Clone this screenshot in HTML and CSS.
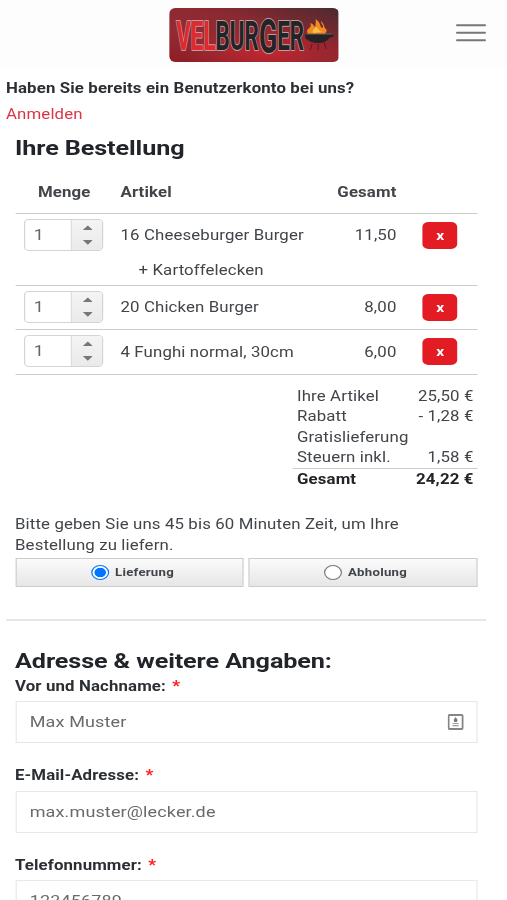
FILE: index.html
```html
<!DOCTYPE html>
<html lang="de">
<head>
<meta charset="utf-8">
<title>Velburger – Bestellung</title>
<link rel="stylesheet" href="styles.css">
</head>
<body>
<div class="page">
  <header class="topbar">
    <svg class="logo" viewBox="0 0 170 54" preserveAspectRatio="none" role="img" aria-label="Velburger">
      <defs>
        <linearGradient id="bg" x1="0" y1="1" x2="1" y2="0"><stop offset="0" stop-color="#8f1c24"/><stop offset=".3" stop-color="#942b34"/><stop offset=".6" stop-color="#8c2930"/><stop offset="1" stop-color="#4c2a30"/></linearGradient>
        <radialGradient id="glow" cx=".58" cy=".8" r=".5"><stop offset="0" stop-color="#c62630"/><stop offset="1" stop-color="#b0202a" stop-opacity="0"/></radialGradient>
      </defs>
      <rect width="170" height="54" rx="6" fill="url(#bg)"/>
      <rect width="170" height="54" rx="6" fill="url(#glow)"/>
      <text class="wordmark" x="7" y="42" textLength="128" lengthAdjust="spacingAndGlyphs"><tspan class="vel">VEL</tspan><tspan class="bur">BUR</tspan><tspan class="bur big" dy="3.500">G</tspan><tspan class="bur" dy="-3.500">ER</tspan></text>
      <path d="M139 26C135 20 144 21 141 15C147 17 144 21 147 20C145 15 148 15 146 11C152 14 150 18 153 20C156 18 151 16 152 13C156 18 155 21 157 21C158 23 157 25 155 26Z" fill="#f38a22"/>
      <path d="M144 25C142 21 147 22 145 18C151 21 149 23 153 24Z" fill="#ffbf45"/>
      <path d="M136 26L163 26L165 28L160 30Q157 35 149 35Q141 35 136 30Z" fill="#252225"/>
      <path d="M137 26H163" stroke="#665" stroke-width="1"/>
      <path d="M143 36L141 42M149 36V42M155 35L157 41" stroke="#5d171f" stroke-width="1"/>
    </svg>
    <svg class="burger" viewBox="0 0 30 18" preserveAspectRatio="none"><path d="M1 1.300H29M1 8.800H29M1 16.300H29" stroke="#77777b" stroke-width="2" stroke-linecap="round"/></svg>
  </header>

  <section class="account">
    <div class="question">Haben Sie bereits ein Benutzerkonto bei uns?</div>
    <a class="login">Anmelden</a>
  </section>

  <main class="content">
    <h1>Ihre Bestellung</h1>
    <div class="row head"><span class="menge">Menge</span><span>Artikel</span><span class="num">Gesamt</span><span></span></div>
    <div class="item">
      <div class="row"><div class="qty"><span>1</span><i><svg viewBox="0 0 10 24" preserveAspectRatio="none"><path d="M0 6.500L5 1.500L10 6.500ZM0 17.500L5 22.500L10 17.500Z"/></svg></i></div><span>16 Cheeseburger Burger</span><span class="num">11,50</span><button class="del">x</button></div>
      <div class="extra">+ Kartoffelecken</div>
    </div>
    <div class="item">
      <div class="row"><div class="qty"><span>1</span><i><svg viewBox="0 0 10 24" preserveAspectRatio="none"><path d="M0 6.500L5 1.500L10 6.500ZM0 17.500L5 22.500L10 17.500Z"/></svg></i></div><span>20 Chicken Burger</span><span class="num">8,00</span><button class="del">x</button></div>
    </div>
    <div class="item last">
      <div class="row"><div class="qty"><span>1</span><i><svg viewBox="0 0 10 24" preserveAspectRatio="none"><path d="M0 6.500L5 1.500L10 6.500ZM0 17.500L5 22.500L10 17.500Z"/></svg></i></div><span>4 Funghi normal, 30cm</span><span class="num">6,00</span><button class="del">x</button></div>
    </div>

    <div class="totals">
      <div><span>Ihre Artikel</span><span>25,50 €</span></div>
      <div><span>Rabatt</span><span>- 1,28 €</span></div>
      <div><span>Gratislieferung</span></div>
      <div><span>Steuern inkl.</span><span>1,58 €</span></div>
      <div class="sum"><span>Gesamt</span><span>24,22 €</span></div>
    </div>

    <p class="note">Bitte geben Sie uns 45 bis 60 Minuten Zeit, um Ihre<br>Bestellung zu liefern.</p>
    <div class="modes">
      <div class="mode"><span class="radio on"></span>Lieferung</div>
      <div class="mode"><span class="radio"></span>Abholung</div>
    </div>
  </main>
  <hr>
  <section class="content form">
    <h2>Adresse &amp; weitere Angaben:</h2>
    <div class="label">Vor und Nachname: <b>*</b></div>
    <div class="field"><span>Max Muster</span>
      <svg class="fill" viewBox="0 0 16 16" preserveAspectRatio="none"><rect x="1" y="1" width="14" height="14" rx="1" fill="none" stroke="#858585" stroke-width="1.800"/><path d="M8 3L10 6L9.300 8H6.700L6 6Z" fill="#777"/><path d="M5 9.500H11M5 11.700H11" stroke="#999" stroke-width="1.200"/></svg>
    </div>
    <div class="label">E-Mail-Adresse: <b>*</b></div>
    <div class="field"><span>max.muster@lecker.de</span></div>
    <div class="label">Telefonnummer: <b>*</b></div>
    <div class="field"><span>123456789</span></div>
  </section>
</div>
</body>
</html>
```
FILE: styles.css
```css
/* The page is set 1.2 times wider than tall; --u is one rendered horizontal pixel. */
* { box-sizing: border-box; }
html, body { margin: 0; height: 900px; overflow: hidden; background: #fff; }
.page {
  --u: calc(1px / 1.2);
  width: calc(507 * var(--u));
  height: 900px;
  overflow: hidden;
  transform: scaleX(1.2);
  transform-origin: 0 0;
  font: 14px/20.6px Roboto, "Liberation Sans", sans-serif;
  letter-spacing: 0.11px;
  color: #414549;
}
.topbar {
  height: 68px;
  background: #fdfdfd;
  display: flex;
  justify-content: space-between;
  align-items: flex-start;
  padding: 7.5px calc(20.5 * var(--u)) 0 calc(169 * var(--u));
}
.logo { width: calc(170 * var(--u)); height: 54px; }
.wordmark { font-family: Roboto, sans-serif; font-weight: 700; font-size: 40px; letter-spacing: 0; paint-order: stroke; stroke: #b8a0a0; stroke-width: 2px; stroke-linejoin: round; }
.vel { fill: #e0282d; }
.bur { fill: #242326; }
.big { font-size: 48px; }
.burger { width: calc(30 * var(--u)); height: 18px; margin-top: 16px; }

.account { padding: 7px calc(6 * var(--u)) 0; line-height: 26px; }
.question { font-weight: 700; color: #2b2f33; }
.login { display: block; color: #dc3545; }

.content { padding: 0 calc(30 * var(--u)) 0 calc(15 * var(--u)); }
h1, h2 { margin: 0; font-size: 21px; font-weight: 700; letter-spacing: -0.09px; color: #212529; }
h1 { line-height: 42px; }
h2 { line-height: 30px; }
.row {
  display: grid;
  grid-template-columns: calc(96.5 * var(--u)) calc(200 * var(--u)) calc(67 * var(--u)) calc(34 * var(--u));
  column-gap: calc(9 * var(--u));
  align-items: center;
  height: 43.2px;
}
.row > span { white-space: nowrap; }
.row > .num { text-align: right; }
.head { font-weight: 700; height: 44px; padding-top: 3px; }
.menge { padding-left: calc(23 * var(--u)); }
.item { border-top: 1px solid #ccc; }
.last { border-bottom: 1px solid #ccc; }
.extra { height: 28px; line-height: 27px; padding-left: calc(123.5 * var(--u)); }
.qty {
  display: flex;
  width: calc(79 * var(--u));
  height: 32px;
  margin: 0 0 1.5px calc(9.5 * var(--u));
  border: 1px solid #d5d5d5;
  border-radius: 4px;
  overflow: hidden;
  font-size: 15px;
  line-height: 31px;
  color: #666;
}
.qty span { flex: 1; padding-left: calc(8 * var(--u)); }
.qty i {
  width: calc(31 * var(--u));
  border-left: 1px solid #ddd;
  background: linear-gradient(#f4f4f4, #eaeaea);
  display: flex;
  align-items: center;
  justify-content: center;
}
.qty svg { width: calc(10 * var(--u)); height: 22px; fill: #777; }
.del {
  width: calc(34.5 * var(--u));
  height: 27px;
  margin: 0 0 1px calc(17.5 * var(--u));
  padding: 0;
  border: 0;
  border-radius: 5px;
  background: #e31b23;
  color: #fff;
  font: 700 13px/27px Roboto, sans-serif;
}

.totals { width: calc(184 * var(--u)); margin: 11px 0 0 auto; }
.totals div { display: flex; justify-content: space-between; height: 20.6px; padding: 0 calc(3.5 * var(--u)) 0 calc(4 * var(--u)); }
.totals .sum { border-top: 1px solid #ccc; font-weight: 700; color: #212529; }

.note { margin: 25.5px 0 0; white-space: nowrap; }
.modes { display: flex; gap: calc(4 * var(--u)); margin-top: 3px; }
.mode {
  flex: 1;
  height: 29px;
  display: flex;
  align-items: center;
  justify-content: center;
  padding-left: calc(6 * var(--u));
  border: 1px solid #ccc;
  background: linear-gradient(#fbfbfb, #e6e6e6);
  font: 700 11px/27px Roboto, sans-serif;
  letter-spacing: 0.22px;
}
.radio { width: calc(18 * var(--u)); height: 15px; margin-right: calc(6 * var(--u)); border: 1px solid #777; border-radius: 50%; background: #fff; }
.on { border-color: #0075ff; background: radial-gradient(closest-side, #0075ff 68%, #fff 78%); }
hr { width: calc(480 * var(--u)); height: 2px; margin: 32px 0 24.5px calc(6 * var(--u)); border: 0; background: #e6e6e6; }

.label { font-weight: 700; color: #2b2f33; line-height: 20px; }
.label b { color: #f22; margin-left: calc(2 * var(--u)); }
.field {
  display: flex;
  align-items: center;
  justify-content: space-between;
  height: 42.5px;
  margin: 5.2px 0 22px;
  padding: 0 calc(12 * var(--u)) 0 calc(13.5 * var(--u));
  border: 1px solid #e8e8e8;
  font-size: 15px;
  color: #6a6a6a;
}
.fill { width: calc(16 * var(--u)); height: 16px; }
```
